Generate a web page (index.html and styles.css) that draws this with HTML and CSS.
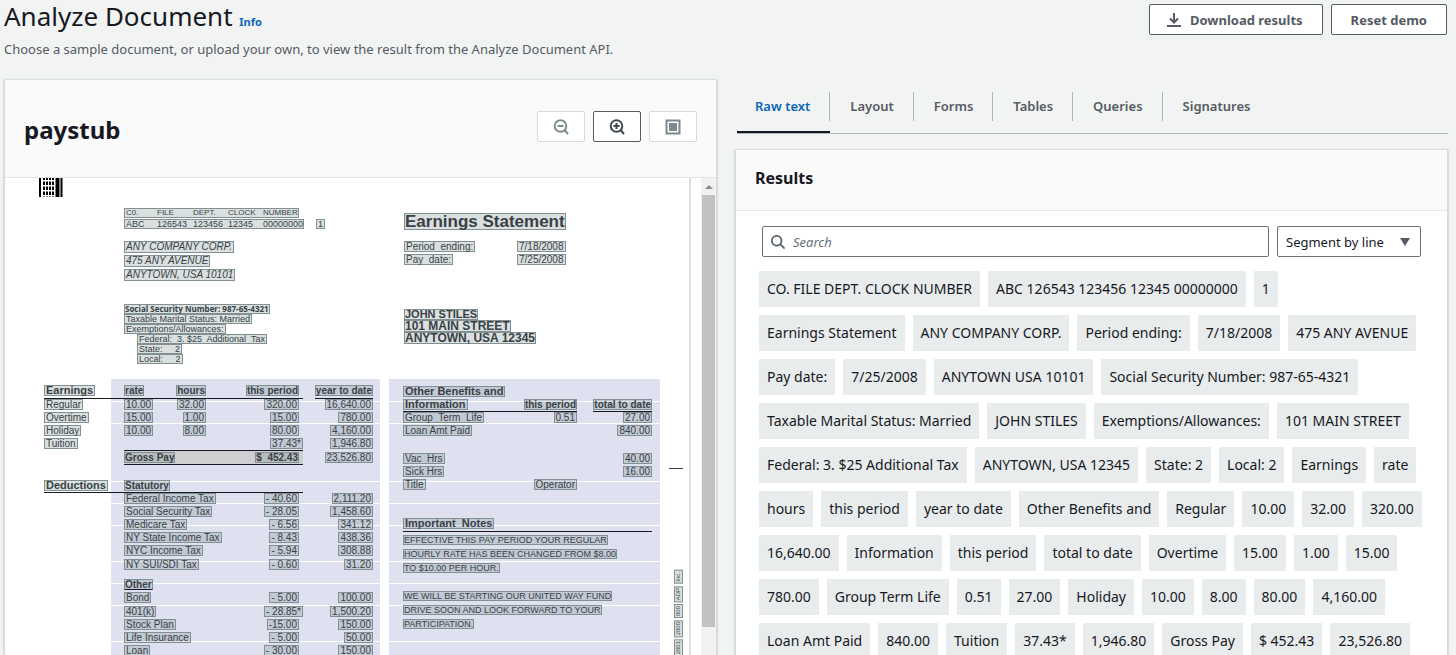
FILE: index.html
```html
<!DOCTYPE html>
<html lang="en">
<head>
<meta charset="utf-8">
<title>Analyze Document</title>
<link rel="stylesheet" href="styles.css">
</head>
<body>
<header class="page-header">
  <div>
    <h1 class="page-title">Analyze Document <a class="info" href="#">Info</a></h1>
    <p class="lead">Choose a sample document, or upload your own, to view the result from the Analyze Document API.</p>
  </div>
  <div class="actions">
    <button class="btn" type="button">
      <svg width="16" height="16" viewBox="0 0 16 16" fill="none" stroke="currentColor" stroke-width="2"><path d="M8 1v9M4 6.500l4 4 4-4M1 14h14"/></svg>
      Download results
    </button>
    <button class="btn" type="button">Reset demo</button>
  </div>
</header>

<main class="columns">
  <section class="panel">
    <div class="doc-head">
      <h2 class="doc-title">paystub</h2>
      <div class="tools">
        <button class="tool" type="button" aria-label="Zoom out">
          <svg width="16" height="16" viewBox="0 0 16 16" fill="none" stroke="currentColor" stroke-width="2"><circle cx="7.500" cy="7" r="5.800"/><path d="M4.500 7h6M11.500 11l3.500 4"/></svg>
        </button>
        <button class="tool tool-on" type="button" aria-label="Zoom in">
          <svg width="16" height="16" viewBox="0 0 16 16" fill="none" stroke="currentColor" stroke-width="2"><circle cx="7.500" cy="7" r="5.800"/><path d="M4.500 7h6M7.500 4v6M11.500 11l3.500 4"/></svg>
        </button>
        <button class="tool" type="button" aria-label="Fit to window">
          <svg width="16" height="16" viewBox="0 0 16 16"><path d="M1.500 1.500h13v13h-13z" fill="none" stroke="currentColor" stroke-width="2"/><path d="M4 4h8v8H4z" fill="currentColor"/></svg>
        </button>
      </div>
    </div>
    <div class="viewer">
      <div class="sheet">
        <svg class="barcode" width="24" height="19" viewBox="0 0 24 19">
          <g stroke="#000"><path d="M1 0v19" stroke-width="2"/><path d="M5 0v19M8 0v19M11 0v19M14 0v19" stroke-width="2" stroke-dasharray="2 1.500 3.500 1.500 3.500 1.500 3.500 1.500 2"/><path d="M18.500 0v19" stroke-width="4"/><path d="M22.500 0v19" stroke-width="2"/></g>
        </svg>
        <div class="top">
          <div class="employer">
            <div class="codes">
              <div class="mark code-row code-head"><span>C0.</span><span>FILE</span><span>DEPT.</span><span>CLOCK</span><span>NUMBER</span></div>
              <div class="code-line">
                <div class="mark code-row code-wide"><span>ABC</span><span>126543</span><span>123456</span><span>12345</span><span>00000000</span></div>
                <span class="mark">1</span>
              </div>
            </div>
            <div class="stack company">
              <span class="mark">ANY COMPANY CORP.</span>
              <span class="mark">475 ANY AVENUE</span>
              <span class="mark">ANYTOWN, USA 10101</span>
            </div>
            <div class="stack status">
              <span class="mark ssn">Social Security Number: 987-65-4321</span>
              <span class="mark">Taxable Marital Status: Married</span>
              <span class="mark">Exemptions/Allowances:</span>
              <span class="mark indent">Federal:  3. $25  Additional  Tax</span>
              <span class="mark indent">State:     2</span>
              <span class="mark indent">Local:     2</span>
            </div>
          </div>
          <div class="statement">
            <span class="mark statement-title">Earnings Statement</span>
            <dl class="dates">
              <dt><span class="mark">Period  ending:</span></dt><dd><span class="mark">7/18/2008</span></dd>
              <dt><span class="mark">Pay  date:</span></dt><dd><span class="mark">7/25/2008</span></dd>
            </dl>
            <div class="stack payee">
              <span class="mark payee-name">JOHN STILES</span>
              <span class="mark">101 MAIN STREET</span>
              <span class="mark">ANYTOWN, USA 12345</span>
            </div>
          </div>
        </div>
        <div class="bottom">
          <div class="ledger">
            <table class="pay">
              <colgroup><col class="c-label"><col class="c-rate"><col class="c-hours"><col class="c-period"><col class="c-gap"><col class="c-ytd"></colgroup>
              <tbody>
                <tr class="head"><th class="line big"><span class="mark">Earnings</span></th><th class="line"><span class="mark">rate</span></th><th class="line num"><span class="mark">hours</span></th><th class="line num per"><span class="mark">this period</span></th><td></td><th class="line num"><span class="mark">year to date</span></th></tr>
                <tr><td><span class="mark">Regular</span></td><td><span class="mark">10.00</span></td><td class="num"><span class="mark">32.00</span></td><td class="num per"><span class="mark">320.00</span></td><td class="num" colspan="2"><span class="mark">16,640.00</span></td></tr>
                <tr><td><span class="mark">Overtime</span></td><td><span class="mark">15.00</span></td><td class="num"><span class="mark">1.00</span></td><td class="num per"><span class="mark">15.00</span></td><td class="num" colspan="2"><span class="mark">780.00</span></td></tr>
                <tr><td><span class="mark">Holiday</span></td><td><span class="mark">10.00</span></td><td class="num"><span class="mark">8.00</span></td><td class="num per"><span class="mark">80.00</span></td><td class="num" colspan="2"><span class="mark">4,160.00</span></td></tr>
                <tr><td><span class="mark">Tuition</span></td><td></td><td></td><td class="num"><span class="mark">37.43*</span></td><td class="num" colspan="2"><span class="mark">1,946.80</span></td></tr>
                <tr class="gross"><td></td><th class="boxed" colspan="2"><span class="mark">Gross Pay</span></th><th class="boxed num per"><span class="mark">$  452.43</span></th><td class="num" colspan="2"><span class="mark">23,526.80</span></td></tr>
              </tbody>
              <tbody>
                <tr class="gap"><td colspan="6"></td></tr>
                <tr><th class="line big"><span class="mark">Deductions</span></th><th class="line" colspan="3"><span class="mark">Statutory</span></th><td colspan="2"></td></tr>
                <tr><td></td><td colspan="2"><span class="mark">Federal Income Tax</span></td><td class="num per"><span class="mark">- 40.60</span></td><td class="num" colspan="2"><span class="mark">2,111.20</span></td></tr>
                <tr><td></td><td colspan="2"><span class="mark">Social Security Tax</span></td><td class="num per"><span class="mark">- 28.05</span></td><td class="num" colspan="2"><span class="mark">1,458.60</span></td></tr>
                <tr><td></td><td colspan="2"><span class="mark">Medicare Tax</span></td><td class="num per"><span class="mark">- 6.56</span></td><td class="num" colspan="2"><span class="mark">341.12</span></td></tr>
                <tr><td></td><td colspan="2"><span class="mark">NY State Income Tax</span></td><td class="num per"><span class="mark">- 8.43</span></td><td class="num" colspan="2"><span class="mark">438.36</span></td></tr>
                <tr><td></td><td colspan="2"><span class="mark">NYC Income Tax</span></td><td class="num per"><span class="mark">- 5.94</span></td><td class="num" colspan="2"><span class="mark">308.88</span></td></tr>
                <tr class="head"><td></td><td colspan="2"><span class="mark">NY SUI/SDI Tax</span></td><td class="num per"><span class="mark">- 0.60</span></td><td class="num" colspan="2"><span class="mark">31.20</span></td></tr>
              </tbody>
              <tbody>
                <tr class="gap-small"><td colspan="6"></td></tr>
                <tr class="head"><td></td><th colspan="5"><span class="mark underlined">Other</span></th></tr>
                <tr><td></td><td colspan="2"><span class="mark">Bond</span></td><td class="num per"><span class="mark">- 5.00</span></td><td class="num" colspan="2"><span class="mark">100.00</span></td></tr>
                <tr class="head"><td></td><td colspan="2"><span class="mark">401(k)</span></td><td class="num"><span class="mark">- 28.85*</span></td><td class="num" colspan="2"><span class="mark">1,500.20</span></td></tr>
                <tr><td></td><td colspan="2"><span class="mark">Stock Plan</span></td><td class="num per"><span class="mark">-15.00</span></td><td class="num" colspan="2"><span class="mark">150.00</span></td></tr>
                <tr><td></td><td colspan="2"><span class="mark">Life Insurance</span></td><td class="num per"><span class="mark">- 5.00</span></td><td class="num" colspan="2"><span class="mark">50.00</span></td></tr>
                <tr><td></td><td colspan="2"><span class="mark">Loan</span></td><td class="num per"><span class="mark">- 30.00</span></td><td class="num" colspan="2"><span class="mark">150.00</span></td></tr>
              </tbody>
            </table>
          </div>
          <div class="benefits">
            <table class="pay">
              <colgroup><col class="b-name"><col class="b-period"><col class="b-gap"><col class="b-total"></colgroup>
              <tbody>
                <tr><th class="big" colspan="4"><span class="mark">Other Benefits and</span></th></tr>
                <tr><th class="line big"><span class="mark">Information</span></th><th class="line num"><span class="mark">this period</span></th><td></td><th class="line num"><span class="mark">total to date</span></th></tr>
                <tr><td><span class="mark">Group  Term  Life</span></td><td class="num"><span class="mark">0.51</span></td><td></td><td class="num"><span class="mark">27.00</span></td></tr>
                <tr><td><span class="mark">Loan Amt Paid</span></td><td></td><td></td><td class="num"><span class="mark">840.00</span></td></tr>
                <tr class="gap"><td colspan="4"></td></tr>
                <tr><td><span class="mark">Vac  Hrs</span></td><td></td><td></td><td class="num"><span class="mark">40.00</span></td></tr>
                <tr><td><span class="mark">Sick Hrs</span></td><td></td><td></td><td class="num"><span class="mark">16.00</span></td></tr>
                <tr><td><span class="mark">Title</span></td><td class="num"><span class="mark">Operator</span></td><td></td><td></td></tr>
              </tbody>
            </table>
            <h3 class="notes-title"><span class="mark">Important  Notes</span></h3>
            <div class="stack notes">
              <span class="mark">EFFECTIVE THIS PAY PERIOD YOUR REGULAR</span>
              <span class="mark">HOURLY RATE HAS BEEN CHANGED FROM $8.00</span>
              <span class="mark">TO $10.00 PER HOUR.</span>
            </div>
            <div class="stack notes">
              <span class="mark">WE WILL BE STARTING OUR UNITED WAY FUND</span>
              <span class="mark">DRIVE SOON AND LOOK FORWARD TO YOUR</span>
              <span class="mark">PARTICIPATION.</span>
            </div>
          </div>
          <div class="edge">
            <span class="dash"></span>
            <div class="imprint"><span class="mark">Inc.</span><span class="mark">ADP</span><span class="mark">000</span><span class="mark">2000</span><span class="mark">2001</span></div>
          </div>
        </div>
      </div>
      <div class="scrollbar"><svg width="15" height="17" viewBox="0 0 15 17"><path d="M4 11l4-4 4 4z" fill="#8a8a8a"/></svg><span class="thumb"></span></div>
    </div>
  </section>

  <section class="side">
    <nav class="tabs" role="tablist">
      <button class="tab tab-on" type="button" role="tab" aria-selected="true"><span>Raw text</span></button>
      <button class="tab" type="button" role="tab"><span>Layout</span></button>
      <button class="tab" type="button" role="tab"><span>Forms</span></button>
      <button class="tab" type="button" role="tab"><span>Tables</span></button>
      <button class="tab" type="button" role="tab"><span>Queries</span></button>
      <button class="tab" type="button" role="tab"><span>Signatures</span></button>
    </nav>
    <div class="panel results">
      <h2 class="results-head">Results</h2>
      <div class="filters">
        <label class="search">
          <svg width="14" height="14" viewBox="0 0 16 16" fill="none" stroke="currentColor" stroke-width="2"><circle cx="6.500" cy="6.500" r="5.500"/><path d="M10 10l5.500 5.500"/></svg>
          <input type="text" placeholder="Search" aria-label="Search">
        </label>
        <label class="segment">
          <select aria-label="Segment"><option>Segment by line</option></select>
          <svg width="10" height="8" viewBox="0 0 10 8"><path d="M0 0h10L5 8z" fill="#545b64"/></svg>
        </label>
      </div>
      <div class="chips">
        <span>CO. FILE DEPT. CLOCK NUMBER</span><span>ABC 126543 123456 12345 00000000</span><span>1</span>
        <span>Earnings Statement</span><span>ANY COMPANY CORP.</span><span>Period ending:</span><span>7/18/2008</span><span>475 ANY AVENUE</span>
        <span>Pay date:</span><span>7/25/2008</span><span>ANYTOWN USA 10101</span><span>Social Security Number: 987-65-4321</span>
        <span>Taxable Marital Status: Married</span><span>JOHN STILES</span><span>Exemptions/Allowances:</span><span>101 MAIN STREET</span>
        <span>Federal: 3. $25 Additional Tax</span><span>ANYTOWN, USA 12345</span><span>State: 2</span><span>Local: 2</span><span>Earnings</span><span>rate</span>
        <span>hours</span><span>this period</span><span>year to date</span><span>Other Benefits and</span><span>Regular</span><span>10.00</span><span>32.00</span><span>320.00</span>
        <span>16,640.00</span><span>Information</span><span>this period</span><span>total to date</span><span>Overtime</span><span>15.00</span><span>1.00</span><span>15.00</span>
        <span>780.00</span><span>Group Term Life</span><span>0.51</span><span>27.00</span><span>Holiday</span><span>10.00</span><span>8.00</span><span>80.00</span><span>4,160.00</span>
        <span>Loan Amt Paid</span><span>840.00</span><span>Tuition</span><span>37.43*</span><span>1,946.80</span><span>Gross Pay</span><span>$ 452.43</span><span>23,526.80</span>
      </div>
    </div>
  </section>
</main>
</body>
</html>
```
FILE: styles.css
```css
* { box-sizing: border-box; }
body {
  display: flex;
  flex-direction: column;
  margin: 0;
  height: 100vh;
  overflow: hidden;
  background: #f2f3f3;
  color: #16191f;
  font: 14px/20px "Noto Sans", "Open Sans", sans-serif;
}
h1, h2, h3, p, dl, dd { margin: 0; }
button, input, select { font: inherit; color: inherit; }
svg { display: block; flex: none; }

.page-header {
  display: flex;
  flex: none;
  justify-content: space-between;
  padding: 0 9px 0 4px;
  height: 80px;
}
.page-title { font-size: 26px; line-height: 32px; font-weight: 400; }
.info { font-size: 11px; font-weight: 700; color: #0a66b7; text-decoration: none; }
.lead { margin-top: 1px; line-height: 20px; font-size: 13px; color: #545b64; }
.actions { display: flex; gap: 8px; padding-top: 4px; align-items: flex-start; }
.btn {
  display: flex;
  align-items: center;
  gap: 8px;
  height: 31px;
  padding: 0 19px;
  background: #fff;
  border: 1px solid #545b64;
  border-radius: 2px;
  color: #545b64;
  font-size: 13px;
  font-weight: 700;
}
.btn svg { margin-left: -3px; }

.columns {
  display: grid;
  flex: 1;
  min-height: 0;
  grid-template-columns: minmax(0, 1fr) minmax(0, 1fr);
  grid-template-rows: minmax(0, 1fr);
  gap: 18px;
  padding: 0 8px 0 4px;
}
.panel {
  display: flex;
  flex-direction: column;
  min-height: 0;
  background: #fff;
  border: solid #d5dbdb;
  border-width: 0 1px;
  box-shadow: 0 0 2px rgba(0, 28, 36, .3);
}

.doc-head {
  display: flex;
  flex: none;
  align-items: center;
  justify-content: space-between;
  height: 98px;
  padding: 4px 19px 6px;
  background: #fafafa;
  border-bottom: 1px solid #e0e4e4;
}
.doc-title { padding-top: 5px; font-size: 24px; line-height: 32px; }
.tools { display: flex; gap: 8px; padding-bottom: 2px; }
.tool {
  display: grid;
  place-items: center;
  width: 48px;
  height: 31px;
  padding: 0;
  background: #fff;
  border: 1px solid #d5dbdb;
  border-radius: 2px;
  color: #7c8a8d;
}
.tool-on { border-color: #545b64; color: #414850; }

.viewer { display: flex; flex: 1; min-height: 0; overflow: hidden; }
.sheet {
  flex: 1;
  border-right: 2px solid #dddfe0;
  font: 10px/10px "Liberation Sans", Arial, sans-serif;
  color: #3a4045;
}
.mark {
  display: inline-block;
  padding: 0 1px;
  border: 1px solid #829092;
  background: rgba(110, 135, 130, .26);
  line-height: 9px;
  white-space: pre;
}
.stack { display: flex; flex-direction: column; align-items: flex-start; }
.barcode { margin-left: 34px; }
.top { display: flex; padding: 11px 0 0 119px; height: 182px; }
.employer { width: 280px; }
.codes { display: flex; flex-direction: column; align-items: flex-start; gap: 1px; font-size: 9px; line-height: 9px; }
.codes .mark { line-height: 8px; }
.codes .code-head { width: 175px; font-size: 8px; }
.code-line { display: flex; gap: 12px; }
.code-row { display: grid; grid-template-columns: 31px 36px 35px 35px auto; }
.code-wide { width: 180px; }
.company { margin-top: 12px; gap: 2px; font-size: 10px; font-style: italic; }
.company .mark { line-height: 9px; padding: 0 1px 1px; }
.status { margin-top: 23px; font-size: 9px; }
.status .mark { line-height: 8px; }
.status .ssn { padding: 0; font: 700 8px/8px "Open Sans", sans-serif; }
.indent { margin-left: 13px; }
.statement-title { margin-top: 5px; padding: 0; font-size: 17px; font-weight: 700; line-height: 15px; }
.dates { display: grid; grid-template-columns: 113px auto; gap: 2px 0; margin-top: 11px; }
.dates dt, .dates dd { height: 11px; }
.payee { margin-top: 44px; font-size: 12px; font-weight: 700; }
.payee .mark { padding: 0; line-height: 10px; }
.payee .payee-name { font-size: 11px; line-height: 9px; }

.bottom { display: flex; height: 400px; }
.ledger, .benefits {
  --stripes:
    linear-gradient(#fff, #fff) 0 22px / 100% 1px no-repeat,
    linear-gradient(#fff, #fff) 0 44px / 100% 1px no-repeat,
    linear-gradient(#fff, #fff) 0 102px / 100% 1px no-repeat,
    linear-gradient(#fff, #fff) 0 124px / 100% 1px no-repeat,
    linear-gradient(#fff, #fff) 0 146px / 100% 1px no-repeat,
    linear-gradient(#fff, #fff) 0 182px / 100% 1px no-repeat,
    linear-gradient(#fff, #fff) 0 204px / 100% 1px no-repeat,
    linear-gradient(#fff, #fff) 0 226px / 100% 1px no-repeat,
    linear-gradient(#fff, #fff) 0 262px / 100% 1px no-repeat;
}
.ledger {
  width: 336px;
  margin-left: 39px;
  padding-top: 5px;
  background: var(--stripes), linear-gradient(#dfe0f0, #dfe0f0) 67px 0 / 269px 100% no-repeat;
}
.benefits {
  width: 271px;
  margin-left: 9px;
  padding: 6px 8px 0 14px;
  background: var(--stripes), #dfe0f0;
}
.pay { table-layout: fixed; border-collapse: collapse; }
.ledger .pay { width: 329px; }
.benefits .pay { width: 249px; }
.c-label { width: 80px; }
.c-rate { width: 41px; }
.c-hours { width: 41px; }
.c-period { width: 97px; }
.c-gap { width: 12px; }
.c-ytd { width: 58px; }
.b-name { width: 100px; }
.b-period { width: 74px; }
.b-gap { width: 16px; }
.b-total { width: 59px; }
.pay td, .pay th { height: 13px; padding: 0; text-align: left; vertical-align: middle; line-height: 10px; white-space: nowrap; }
.pay .mark { vertical-align: top; }
.pay .num { text-align: right; }
.pay .per { padding-right: 4px; }
.pay .line { border-bottom: 1px solid #16191f; }
.pay .num .mark { margin-left: -9px; }
.pay th .mark { padding: 0; }
.pay .big { font-size: 11px; }
.pay .big .mark { padding: 0 1px; }
.pay .head td, .pay .head th { height: 14px; }
.pay .boxed { background: #cfcfd2; border: solid #16191f; border-width: 1px 0; height: 14px; }
.pay .gap td { height: 15px; }
.pay .gap-small td { height: 6px; }
.underlined { border-bottom-color: #16191f; }
.notes-title { margin-top: 27px; border-bottom: 1px solid #16191f; height: 14px; font-size: 11px; line-height: 11px; }
.notes { padding-top: 3px; gap: 4px; margin-bottom: 15px; font-size: 9px; }
.notes .mark { padding: 0; line-height: 8px; }
.edge { display: flex; flex-direction: column; align-items: center; margin-left: 9px; padding-top: 89px; }
.dash { width: 14px; height: 1px; background: #3a4045; }
.imprint { display: flex; flex-direction: column; gap: 2px; align-items: center; margin: 101px 0 0 4px; font-size: 6px; }
.imprint .mark { padding: 1px 0; writing-mode: vertical-rl; line-height: 7px; transform: rotate(180deg); }

.scrollbar { width: 15px; margin-left: 10px; background: #f1f1f1; }
.thumb { display: block; height: 432px; margin: 0 1px; background: #c1c1c1; }

.side { display: flex; flex-direction: column; min-height: 0; }
.tabs { display: flex; flex: none; height: 54px; margin: 0 0 16px 2px; border-bottom: 1px solid #aab7b8; }
.tab {
  display: flex;
  align-items: center;
  height: 53px;
  padding: 0;
  border: 0;
  background: none;
  color: #545b64;
  font-size: 13px;
  font-weight: 600;
}
.tab span { padding: 4px 19px 5px 20px; border-right: 1px solid #aab7b8; }
.tab:last-child span { border-right: 0; }
.tab-on { padding-top: 2px; border-bottom: 2px solid #16191f; color: #0a66b7; }
.tab-on span { padding-left: 18px; }

.results { flex: 1; overflow: hidden; }
.results-head {
  flex: none;
  height: 61px;
  padding: 17px 19px;
  background: #fafafa;
  border-bottom: 1px solid #e6e9e9;
  font-size: 16px;
  line-height: 22px;
}
.filters { display: flex; flex: none; gap: 8px; padding: 15px 26px 14px; }
.search, .segment {
  display: flex;
  align-items: center;
  height: 31px;
  background: #fff;
  border: 1px solid #687078;
  border-radius: 2px;
}
.search { flex: 1; gap: 8px; padding: 0 8px; color: #545b64; }
.search input { flex: 1; min-width: 0; border: 0; padding: 0; outline: 0; background: none; font-size: 13px; }
.search input::placeholder { color: #687078; font-style: italic; opacity: 1; }
.segment { width: 144px; padding: 0 10px 0 8px; font-size: 13px; }
.segment select { flex: 1; min-width: 0; appearance: none; border: 0; padding: 0; background: none; outline: 0; }
.chips { display: flex; flex-wrap: wrap; flex: none; gap: 8px; padding: 0 24px 0 23px; }
.chips span { height: 36px; padding: 8px; background: #e9ecec; white-space: nowrap; }
```
